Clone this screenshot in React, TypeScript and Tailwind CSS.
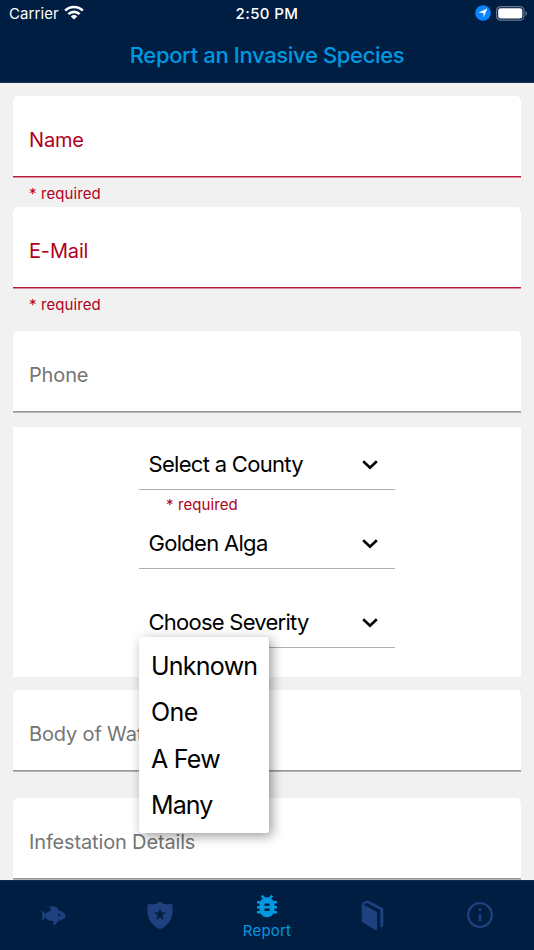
import { MdBugReport } from 'react-icons/md';

const severities = [
  { name: 'Unknown', style: 'tracking-[-0.75px]' },
  { name: 'One', style: 'tracking-[-0.6px]' },
  { name: 'A Few', style: 'tracking-[-0.75px]' },
  { name: 'Many', style: 'tracking-[-0.9px]' },
];

function StatusBar() {
  return (
    <div className="grid h-7 grid-cols-3 items-center px-[9px] text-[15px] text-white">
      <div className="flex items-center gap-1.5">
        <span className="tracking-[0.1px]">Carrier</span>
        <svg className="-mt-[3px] -ml-px" width="20" height="15" viewBox="0 0 20 15" fill="none" stroke="white" strokeWidth="2.7">
          <path d="M1.2 5.6a12.6 12.6 0 0 1 17.6 0" />
          <path d="M4.4 9.1a8 8 0 0 1 11.2 0" />
          <path d="M10 14.6 6.8 11.4a4.6 4.6 0 0 1 6.4 0z" fill="white" stroke="none" />
        </svg>
      </div>
      <span className="text-center font-medium tracking-[0.4px]">2:50 PM</span>
      <div className="-mt-0.5 -mr-[3px] flex items-center justify-end gap-[5px]">
        <svg width="16" height="16" viewBox="0 0 16 16">
          <circle cx="8" cy="8" r="7.8" fill="#0a84ff" />
          <path d="M12.4 3.5 8.5 12.4V7.9L3.5 7.6z" fill="white" />
        </svg>
        <svg width="32" height="15" viewBox="0 0 32 15">
          <rect x="0.6" y="0.6" width="27.3" height="13.6" rx="4" fill="none" stroke="#66778f" strokeWidth="1.2" />
          <rect x="2.2" y="2.2" width="24.1" height="10.4" rx="2.4" fill="white" />
          <path d="M29.5 5c2 .8 2 4 0 4.8z" fill="#66778f" />
        </svg>
      </div>
    </div>
  );
}

function Field({ label, error = false, className = '' }: { label: string; error?: boolean; className?: string }) {
  return (
    <div
      className={`flex h-[82px] items-center rounded-t-[5px] border-b bg-white px-4 pt-1.5 text-[20px] tracking-[-0.15px] ${
        error
          ? 'border-[#dc8c9b] text-[#b00020] shadow-[inset_0_-1px_#b8183a]'
          : 'border-[#b4b4b4] text-[#757575] shadow-[inset_0_-1px_#9a9a9a]'
      } ${className}`}
    >
      {label}
    </div>
  );
}

function Select({ label, className = '' }: { label: string; className?: string }) {
  return (
    <div className="flex h-[51px] items-center justify-between border-b border-[#b0b0b0] pr-[17px] pl-[9.5px] text-[22px] text-black">
      <span className={className}>{label}</span>
      <svg className="mt-px" width="16" height="10" viewBox="0 0 16 10" fill="none" stroke="black" strokeWidth="2.6">
        <path d="m1.2 1.2 6.8 6.6 6.8-6.6" />
      </svg>
    </div>
  );
}

function TabBar() {
  return (
    <nav className="grid h-[70px] shrink-0 grid-cols-5 items-center border-t border-[#0d2b4f] bg-[#001e42] text-[#1f417f]">
      <div className="flex justify-center">
        <svg className="-mt-0.5" width="30" height="30" viewBox="0 0 24 24" fill="currentColor">
          <path d="M12,20L12.76,17C9.5,16.79 6.59,15.4 5.75,13.58C5.66,14.06 5.53,14.5 5.33,14.83C4.67,16 3.33,16 2,16C3.1,16 3.5,14.43 3.5,12.5C3.5,10.57 3.1,9 2,9C3.33,9 4.67,9 5.33,10.17C5.53,10.5 5.66,10.94 5.75,11.42C6.4,10 8.32,8.85 10.66,8.32L9,5C11,5 13,5 14.33,5.67C15.46,6.23 16.11,7.27 16.69,8.38C19.61,9.08 22,10.66 22,12.5C22,14.38 19.5,16 16.5,16.66C15.67,17.76 14.86,18.78 14.17,19.33C13.33,20 12.67,20 12,20M17,11A1,1 0 0,0 16,12A1,1 0 0,0 17,13A1,1 0 0,0 18,12A1,1 0 0,0 17,11Z" />
        </svg>
      </div>
      <div className="flex justify-center">
        <svg className="-mt-px -ml-px" width="26" height="28" viewBox="0 0 26 28" fill="currentColor" fillRule="evenodd">
          <path d="M13 .5c2.2 2 4.8 3 7.5 3 1.6 0 3-.3 4.5-.9.5 2 .5 4.5.5 7.4 0 9-5.5 15.5-12.5 18C6 25.5.5 19 .5 10c0-2.9 0-5.4.5-7.4 1.5.6 2.900.9 4.500.9 2.700 0 5.300-1 7.500-3zM13 7.200l-1.500 4.400H6.900l3.700 2.800-1.400 4.500 3.800-2.700 3.800 2.700-1.400-4.500 3.700-2.800h-4.600z" />
        </svg>
      </div>
      <div className="flex flex-col items-center text-[#0099e0]">
        <MdBugReport className="size-[30px]" />
        <span className="text-[15px] leading-5 tracking-[0.2px]">Report</span>
      </div>
      <div className="flex justify-center">
        <svg className="-mt-px -ml-0.5" width="31" height="31" viewBox="0 0 20 20" fill="currentColor">
          <path d="M17 5.95v10.351c0 .522-.452.771-1 1.16-.44.313-1-.075-1-.587V6.76c0-.211-.074-.412-.314-.535-.24-.123-7.738-4.065-7.738-4.065-.121-.045-.649-.378-1.353-.016-.669.344-1.033.718-1.126.894l8.18 4.482c.217.114.351.29.351.516v10.802a.67.67 0 0 1-.369.585.746.746 0 0 1-.333.077.736.736 0 0 1-.386-.104c-.215-.131-7.774-4.766-8.273-5.067-.24-.144-.521-.439-.527-.658L3 3.385c0-.198-.023-.547.289-1.032C3.986 1.269 6.418.036 7.649.675l8.999 4.555c.217.112.352.336.352.72z" />
        </svg>
      </div>
      <div className="flex justify-center">
        <svg className="-mt-0.5 -ml-0.5" width="26" height="26" viewBox="0 0 26 26" fill="none" stroke="currentColor" strokeWidth="2.3">
          <circle cx="13" cy="13" r="11.8" />
          <path d="M13 12v7.5M13 6.6v2.6" strokeWidth="2.6" />
        </svg>
      </div>
    </nav>
  );
}

export default function App() {
  return (
    <div className="flex h-[950px] w-[534px] flex-col overflow-hidden bg-[#f1f1f1] font-['Inter',sans-serif]">
      {/* Header */}
      <header className="h-[83px] shrink-0 border-b border-[#173357] bg-[#001e42]">
        <StatusBar />
        <h1 className="mt-[11px] text-center text-[22px] leading-8 font-medium tracking-[-0.35px] text-[#0099e0]">
          Report an Invasive Species
        </h1>
      </header>

      {/* Form */}
      <main className="min-h-0 flex-1 overflow-hidden px-[13px] pt-[13px]">
        <Field label="Name" error />
        <p className="h-[29px] pt-1 pl-4 text-[15px] leading-6 tracking-[0.1px] text-[#b00020]">* required</p>
        <Field label="E-Mail" error />
        <p className="h-[42px] pt-1 pl-4 text-[15px] leading-6 tracking-[0.1px] text-[#b00020]">* required</p>
        <Field label="Phone" />

        <div className="mt-3.5 mb-[13px] h-[250px] bg-white px-[126px] pt-3">
          <Select label="Select a County" className="tracking-[-0.7px]" />
          <p className="h-7 pt-[3px] pl-[27px] text-[15px] leading-6 tracking-[0.1px] text-[#b00020]">* required</p>
          <Select label="Golden Alga" className="tracking-[-0.7px]" />
          <div className="relative mt-7">
            <Select label="Choose Severity" className="tracking-[-0.75px]" />
            {/* Severity menu */}
            <ul className="absolute top-[40px] left-0 z-10 h-[196px] w-[130px] rounded-[3px] bg-white pt-[5.5px] pl-3 text-[25px] leading-[46.5px] text-black shadow-[3px_3px_12px_rgba(0,0,0,0.4)]">
              {severities.map((severity) => (
                <li key={severity.name} className={severity.style}>
                  {severity.name}
                </li>
              ))}
            </ul>
          </div>
        </div>

        <Field label="Body of Water" />
        <Field label="Infestation Details" className="mt-[26px]" />
      </main>

      <TabBar />
    </div>
  );
}
